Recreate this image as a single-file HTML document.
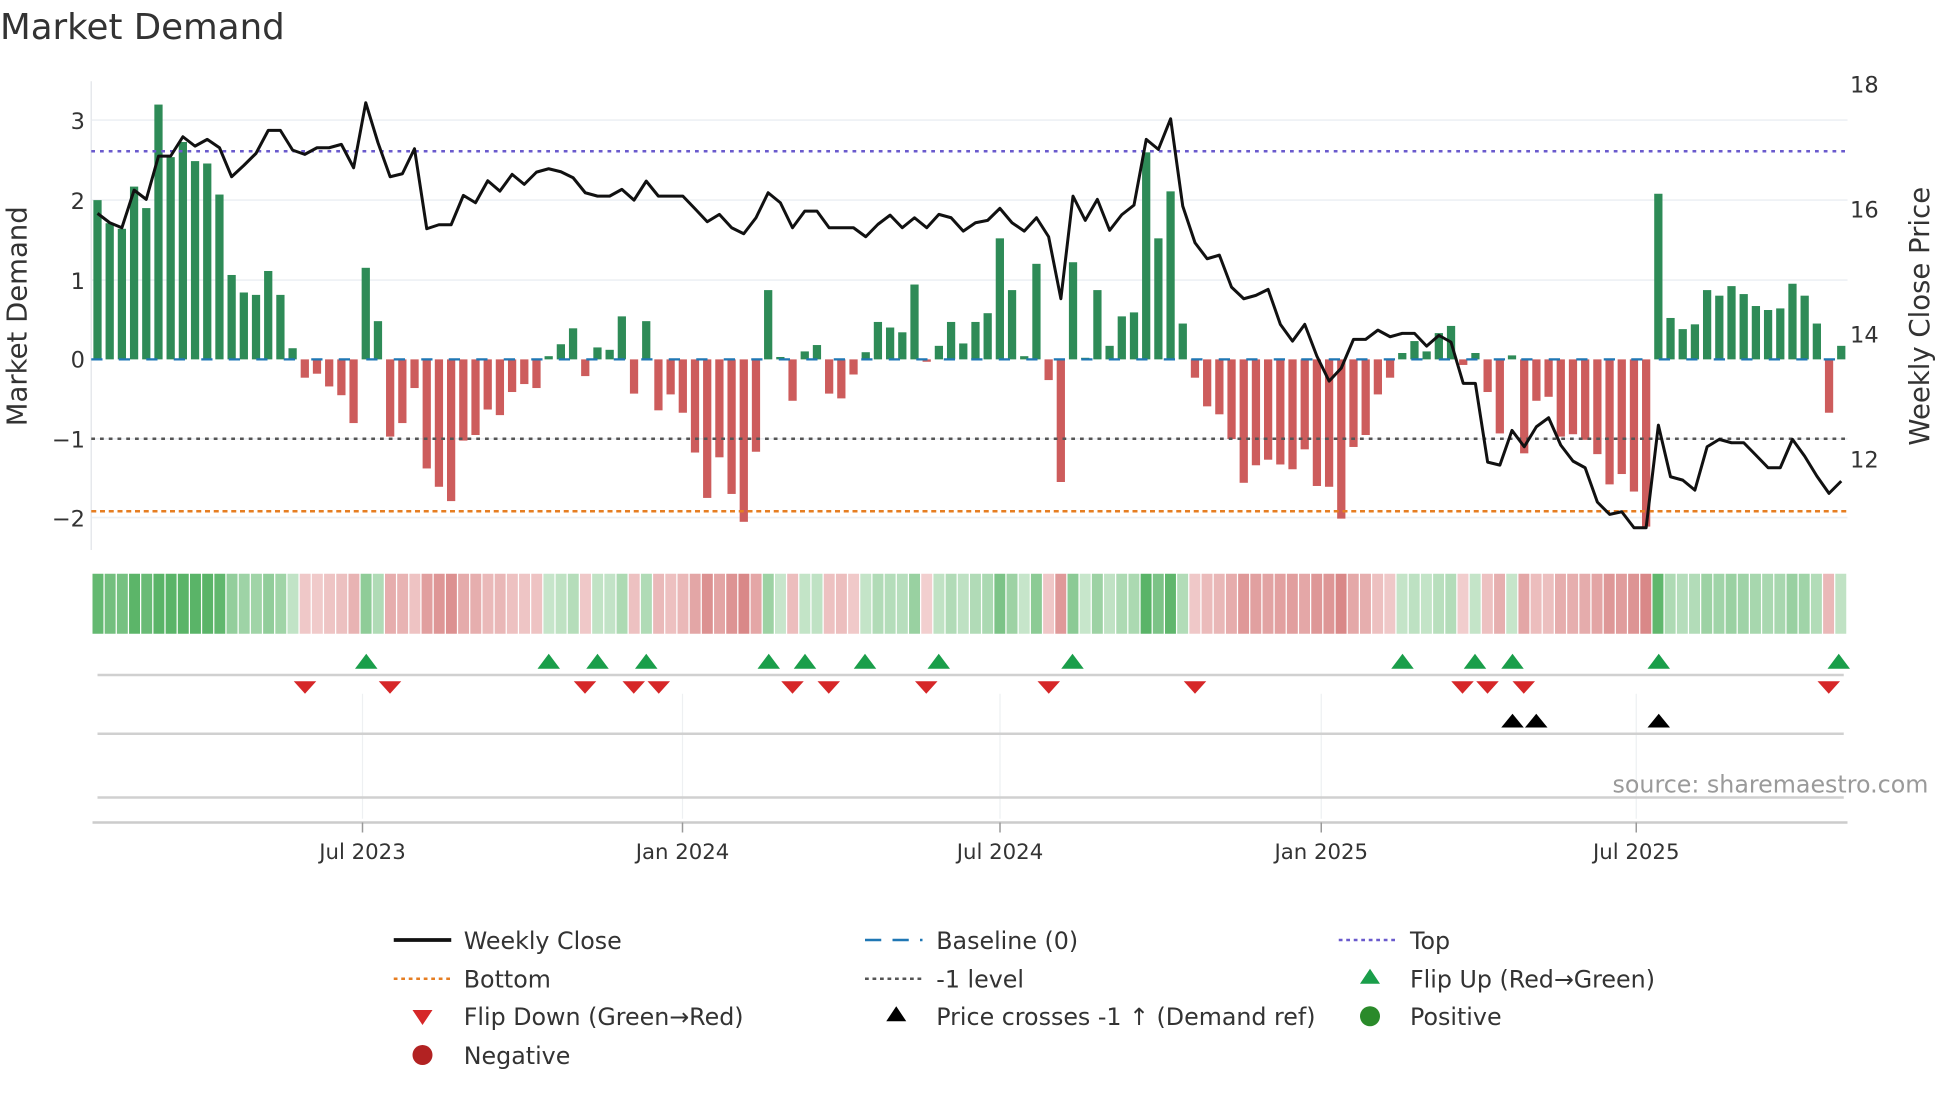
<!DOCTYPE html>
<html><head><meta charset="utf-8"><style>
html,body{margin:0;padding:0;background:#fff;}
svg{display:block;font-family:"DejaVu Sans","Liberation Sans",sans-serif;}
</style></head><body>
<svg id="s" width="1960" height="1102" viewBox="0 0 1568 881.6" xmlns="http://www.w3.org/2000/svg">
<rect width="1568" height="881.6" fill="#fff"/>
<text x="0" y="31" font-size="28.5" fill="#333">Market Demand</text>
<g id="grid" stroke="#edf0f4" stroke-width="1.3">
<line x1="73" x2="1478" y1="96" y2="96"/><line x1="73" x2="1478" y1="160" y2="160"/>
<line x1="73" x2="1478" y1="224" y2="224"/><line x1="73" x2="1478" y1="351" y2="351"/>
<line x1="73" x2="1478" y1="414" y2="414"/>
</g>
<line x1="73" x2="73" y1="65" y2="440" stroke="#e6e8ec" stroke-width="1.2"/>
<g font-size="18" fill="#333" text-anchor="end">
<text x="68" y="103">3</text><text x="68" y="167">2</text><text x="68" y="231">1</text>
<text x="68" y="294">0</text><text x="68" y="358">−1</text><text x="68" y="421">−2</text>
</g>
<g font-size="18" fill="#333">
<text x="1480" y="74">18</text><text x="1480" y="174">16</text><text x="1480" y="274">14</text><text x="1480" y="374">12</text>
</g>
<text transform="translate(21,253) rotate(-90)" font-size="22" fill="#333" text-anchor="middle">Market Demand</text>
<text transform="translate(1543,253) rotate(-90)" font-size="22" fill="#333" text-anchor="middle">Weekly Close Price</text>
<g id="bars"></g>
<line x1="73" x2="1478" y1="287.5" y2="287.5" stroke="#1f77b4" stroke-width="1.8" stroke-dasharray="9,13"/>
<line x1="73" x2="1478" y1="121" y2="121" stroke="#6a5acd" stroke-width="2" stroke-dasharray="3,4"/>
<line x1="73" x2="1478" y1="351" y2="351" stroke="#555" stroke-width="2" stroke-dasharray="3,4"/>
<line x1="73" x2="1478" y1="409" y2="409" stroke="#e67e22" stroke-width="2" stroke-dasharray="4,3"/>
<polyline id="price" fill="none" stroke="#111" stroke-width="2.4" stroke-linejoin="round"/>
<g id="heat"></g>
<g stroke="#eef0f2" stroke-width="1">
<line x1="290" x2="290" y1="555" y2="655"/><line x1="546" x2="546" y1="555" y2="655"/>
<line x1="800" x2="800" y1="555" y2="655"/><line x1="1057" x2="1057" y1="555" y2="655"/>
<line x1="1309" x2="1309" y1="555" y2="655"/>
</g>
<line x1="78" x2="1475" y1="540" y2="540" stroke="#d0d0d0" stroke-width="2"/>
<line x1="78" x2="1475" y1="587" y2="587" stroke="#d0d0d0" stroke-width="2"/>
<line x1="78" x2="1475" y1="638" y2="638" stroke="#d0d0d0" stroke-width="2"/>
<line x1="74" x2="1478" y1="658" y2="658" stroke="#ccc" stroke-width="2"/>
<g stroke="#999" stroke-width="1.2">
<line x1="290" x2="290" y1="658" y2="666"/><line x1="546" x2="546" y1="658" y2="666"/>
<line x1="800" x2="800" y1="658" y2="666"/><line x1="1057" x2="1057" y1="658" y2="666"/>
<line x1="1309" x2="1309" y1="658" y2="666"/>
</g>
<g id="marks"></g>
<g font-size="17" fill="#333" text-anchor="middle">
<text x="290" y="687">Jul 2023</text><text x="546" y="687">Jan 2024</text><text x="800" y="687">Jul 2024</text>
<text x="1057" y="687">Jan 2025</text><text x="1309" y="687">Jul 2025</text>
</g>
<text x="1290" y="634" font-size="19" fill="#9a9a9a">source: sharemaestro.com</text>
<g font-size="19" fill="#333">
<line x1="315" x2="361" y1="752" y2="752" stroke="#111" stroke-width="3"/>
<text x="371" y="759">Weekly Close</text>
<line x1="692" x2="738" y1="752" y2="752" stroke="#1f77b4" stroke-width="2" stroke-dasharray="13,9"/>
<text x="749" y="759">Baseline (0)</text>
<line x1="1071" x2="1116" y1="752" y2="752" stroke="#6a5acd" stroke-width="2" stroke-dasharray="3,3"/>
<text x="1128" y="759">Top</text>
<line x1="315" x2="361" y1="783" y2="783" stroke="#e67e22" stroke-width="2" stroke-dasharray="3,3"/>
<text x="371" y="790">Bottom</text>
<line x1="692" x2="738" y1="783" y2="783" stroke="#555" stroke-width="2" stroke-dasharray="3,3"/>
<text x="749" y="790">-1 level</text>
<polygon points="1096,775 1104,787 1088,787" fill="#1a9e4a"/>
<text x="1128" y="790">Flip Up (Red→Green)</text>
<polygon points="330,808 346,808 338,820" fill="#d62728"/>
<text x="371" y="820">Flip Down (Green→Red)</text>
<polygon points="717,805 725,817 709,817" fill="#000"/>
<text x="749" y="820">Price crosses -1 ↑ (Demand ref)</text>
<circle cx="1096" cy="813" r="8" fill="#2a8a2a"/>
<text x="1128" y="820">Positive</text>
<circle cx="338" cy="844" r="8" fill="#b22222"/>
<text x="371" y="851">Negative</text>
</g>
</svg>
<script>
var v=[2.0,1.71,1.64,2.17,1.9,3.2,2.54,2.73,2.49,2.46,2.07,1.06,0.84,0.81,1.11,0.81,0.14,-0.23,-0.18,-0.34,-0.45,-0.8,1.15,0.48,-0.97,-0.8,-0.36,-1.37,-1.6,-1.78,-1.02,-0.95,-0.63,-0.7,-0.41,-0.31,-0.36,0.04,0.19,0.39,-0.21,0.15,0.12,0.54,-0.43,0.48,-0.64,-0.44,-0.67,-1.17,-1.74,-1.23,-1.69,-2.04,-1.16,0.87,0.03,-0.52,0.1,0.18,-0.43,-0.49,-0.19,0.09,0.47,0.4,0.34,0.94,-0.03,0.17,0.47,0.2,0.47,
0.58,1.52,0.87,0.04,1.2,-0.26,-1.54,1.22,0.02,0.87,0.17,0.54,0.59,2.6,1.52,2.11,0.45,-0.23,-0.59,-0.69,-1.0,-1.55,-1.33,-1.26,-1.32,-1.38,-1.13,-1.59,-1.6,-2.0,-1.1,-0.95,-0.44,-0.23,0.08,0.23,0.1,0.33,0.42,-0.07,0.08,-0.41,-0.93,0.05,-1.18,-0.52,-0.47,-0.97,-0.94,-1.01,-1.19,-1.57,-1.44,-1.66,-2.1,2.08,0.52,0.38,0.44,0.87,0.8,0.92,0.82,0.67,0.62,0.64,0.95,0.8,0.45,-0.67,0.17];
var p1=[462,490,505,392,420,290,290,232,260,240,265,352,318,282,213,213,272,285,265,265,255,325,130,250,352,343,268,508,496,496,408,430,364,395,345,375,338,328,337,355,400,410,410,390,422,365,410,410,410,448,487,465,505,523,475,400,430,505,455,455,505,505,505,532,495,467,505,475,505,465,475,515,490,
483,447,490,515,475,532,718,410,483,420,513,466,437,240,270,178,440,550,598,587,683,718,708,690,795,845,795,890,965,926,840,840,812,832,822,822,860,828,848,972,972,1208,1217,1113,1162,1102,1075,1157,1205,1225,1328,1365,1357,1405,1405,1097,1252,1262,1292,1162,1140,1150,1150,1187,1225,1225,1140,1190,1250,1302,1265];
var NS="http://www.w3.org/2000/svg";
function el(t,a,par){var e=document.createElementNS(NS,t);for(var k in a)e.setAttribute(k,a[k]);document.getElementById(par).appendChild(e);return e;}
var sp=(1473-78)/143,U=63.7,Z=287.5,pts=[];
for(var i=0;i<v.length;i++){
 var x=78+i*sp,val=v[i],h=Math.abs(val)*U;
 el('rect',{x:x-3.3,y:val>=0?Z-h:Z,width:6.6,height:Math.max(h,0.8),fill:val>=0?'#2e8b57':'#cd5c5c'},'bars');
 var c;
 if(val>=0){var t=Math.min(val/2.2,1);var r=Math.round(200-t*110),g=Math.round(230-t*50),b=Math.round(204-t*100);c='rgb('+r+','+g+','+b+')';}
 else{var t=Math.min(-val/2,1);var r=Math.round(242-t*25),g=Math.round(208-t*72),b=Math.round(208-t*72);c='rgb('+r+','+g+','+b+')';}
 el('rect',{x:74+i*(1404/144),y:459,width:1404/144-1,height:48,fill:c},'heat');
 pts.push(x.toFixed(1)+','+(287+(p1[i]-898)/3.75).toFixed(1));
}
document.getElementById('price').setAttribute('points',pts.join(' '));
var up=[293,439,478,517,615,644,692,751,858,1122,1180,1210,1327,1471],dn=[244,312,468,507,527,634,663,741,839,956,1170,1190,1219,1463],bk=[1210,1229,1327];
up.forEach(function(x){el('polygon',{points:(x)+',523 '+(x+9)+',535 '+(x-9)+',535',fill:'#1a9e4a'},'marks');});
dn.forEach(function(x){el('polygon',{points:(x-9)+',545 '+(x+9)+',545 '+x+',555',fill:'#d62728'},'marks');});
bk.forEach(function(x){el('polygon',{points:x+',571 '+(x+9)+',582 '+(x-9)+',582',fill:'#000'},'marks');});
</script>
</body></html>
